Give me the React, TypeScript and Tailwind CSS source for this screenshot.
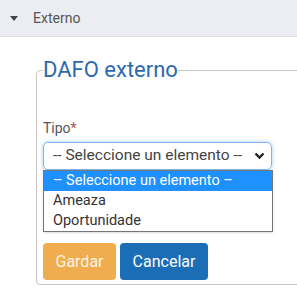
import { type ReactElement } from "react";

export default function App(): ReactElement {
  return (
    <div className="h-[288px] w-[297px] overflow-hidden bg-white font-['Roboto',sans-serif]">
      <div className="flex h-[37px] items-center border-b border-[#dcdde2] bg-[#ecedf2] pl-[10px] text-[14px] text-[#555]">
        <svg width="8" height="5" viewBox="0 0 8 5" className="mr-[15px]">
          <polygon points="0,0 8,0 4,5" fill="#444" />
        </svg>
        <span>Externo</span>
      </div>
      <fieldset className="ml-[36px] mt-[21px] w-[320px] rounded-[4px] border border-[#c8c8c8] pb-[4px] pl-[6px]">
        <legend className="px-0 text-[22px] leading-[24px] text-[#2d6aad]">DAFO externo</legend>
        <div className="pt-[36px] text-[14px] leading-[20px] text-[#555]">
          Tipo<span className="text-[#b0534a]">*</span>
        </div>
        <div className="relative mt-[4px] w-[229px]">
          <div className="flex h-[28px] items-center justify-between rounded-[5px] border border-[#7fb6f0] pl-[9px] pr-[4px] text-[15.5px] text-[#444] shadow-[0_0_3px_1px_rgba(128,182,240,0.45)]">
            <span className="whitespace-nowrap">-- Seleccione un elemento --</span>
            <svg width="11" height="8" viewBox="0 0 11 8" className="mr-[2px] shrink-0">
              <polyline points="1.5,1.5 5.5,5.5 9.5,1.5" fill="none" stroke="#222" strokeWidth="2.4" />
            </svg>
          </div>
          <div className="absolute left-0 top-[28px] w-[230px] border border-[#767676] bg-white text-[14.5px] leading-[20px] text-[#333] shadow-sm">
            <div className="whitespace-nowrap bg-[#1e90ff] pl-[9px] text-white">– Seleccione un elemento –</div>
            <div className="pl-[9px]">Ameaza</div>
            <div className="pl-[9px]">Oportunidade</div>
          </div>
        </div>
        <div className="mt-[73px] flex gap-[4px]">
          <button className="h-[37px] w-[73px] rounded-[4px] bg-[#efad50] text-[16px] text-[#fdf3e4]">Gardar</button>
          <button className="h-[37px] w-[88px] rounded-[4px] bg-[#1b6db5] text-[16px] text-white">Cancelar</button>
        </div>
      </fieldset>
    </div>
  );
}
